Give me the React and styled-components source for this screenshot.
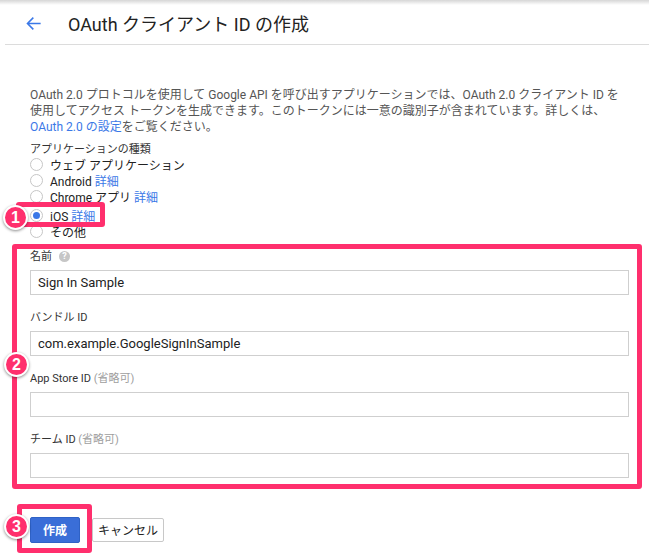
import styled, { createGlobalStyle } from "styled-components";

const GlobalStyle = createGlobalStyle`
  html, body {
    margin: 0;
    padding: 0;
    background: #fff;
  }
  body {
    font-family: Roboto, "Noto Sans CJK JP", sans-serif;
    color: #212121;
  }
`;

const PINK = "#ff2f6d";
const BLUE = "#3b78e7";

const Page = styled.div`
  width: 649px;
  min-height: 558px;
  background: linear-gradient(to bottom, rgba(0, 0, 0, 0.16), rgba(0, 0, 0, 0) 5px) no-repeat;
`;

const Header = styled.div`
  margin-left: 5px;
  height: 45px;
  border-bottom: 1px solid #dcdcdc;
  display: flex;
  align-items: center;
  padding-left: 20px;
  padding-top: 2px;
  box-sizing: border-box;
`;

const Title = styled.h1`
  margin: 0 0 0 26px;
  font-size: 18px;
  font-weight: 400;
  color: #222;
`;

const Content = styled.div`
  padding: 0 20px 0 30px;
`;

const Intro = styled.p`
  margin: 42px 0 0;
  font-size: 12px;
  line-height: 16px;
  color: #555;
`;

const Link = styled.a`
  color: ${BLUE};
  text-decoration: none;
`;

const GroupLabel = styled.div`
  margin-top: 8px;
  font-size: 11px;
  line-height: 13px;
  color: #333;
`;

const RadioRow = styled.label`
  display: flex;
  align-items: center;
  height: 16px;
  font-size: 12px;
  color: #222;
  gap: 7px;
`;

const RadioDot = styled.span`
  width: 13px;
  height: 13px;
  box-sizing: border-box;
  border-radius: 50%;
  border: 1px solid #c6c6c6;
  background: #fff;
  display: flex;
  align-items: center;
  justify-content: center;

  &::after {
    content: "";
    width: 7px;
    height: 7px;
    border-radius: 50%;
    background: ${(p) => (p.$checked ? BLUE : "transparent")};
  }
`;

const Annotated = styled.div`
  position: relative;
  display: ${(p) => (p.$inline ? "inline-flex" : "flow-root")};
`;

const Frame = styled.span`
  position: absolute;
  top: ${(p) => p.$t}px;
  right: ${(p) => p.$r}px;
  bottom: ${(p) => p.$b}px;
  left: ${(p) => p.$l}px;
  border: 5px solid ${PINK};
  border-radius: 3px;
  pointer-events: none;
`;

const Badge = styled.span`
  position: absolute;
  left: ${(p) => p.$x}px;
  top: ${(p) => p.$y}px;
  width: 21px;
  height: 21px;
  border-radius: 50%;
  background: ${PINK};
  border: 2px solid #fff;
  box-shadow: 0 1px 3px rgba(0, 0, 0, 0.45);
  color: #fff;
  font-family: "Liberation Sans", Arial, sans-serif;
  font-weight: 700;
  font-size: 16px;
  line-height: 21px;
  text-align: center;
  z-index: 2;
`;

const Form = styled.div`
  margin-top: 10px;
  width: 599px;
`;

const Field = styled.div`
  & + & {
    margin-top: 16px;
  }
`;

const FieldLabel = styled.div`
  display: flex;
  align-items: center;
  font-size: 11px;
  line-height: 14px;
  color: #333;
  margin-bottom: 6px;
`;

const Optional = styled.span`
  color: #9e9e9e;
`;

const Help = styled.span`
  width: 11px;
  height: 11px;
  border-radius: 50%;
  background: #c6c6c6;
  color: #fff;
  font-size: 9px;
  font-weight: 700;
  line-height: 11px;
  text-align: center;
  margin-left: 7px;
`;

const Input = styled.input`
  display: block;
  width: 100%;
  height: 25px;
  box-sizing: border-box;
  border: 1px solid #cfcfcf;
  padding: 0 7px;
  font-family: Roboto, "Noto Sans CJK JP", sans-serif;
  font-size: 13px;
  color: #222;
  outline: none;
`;

const Actions = styled.div`
  margin-top: 39px;
  display: flex;
  align-items: center;
  gap: 12px;
`;

const Button = styled.button`
  height: ${(p) => (p.$primary ? 26 : 24)}px;
  padding: 0 ${(p) => (p.$primary ? 12 : 5)}px;
  border-radius: 2px;
  border: 1px solid ${(p) => (p.$primary ? "#2f62c6" : "#c8c8c8")};
  background: ${(p) => (p.$primary ? "#3a6ed8" : "#fff")};
  color: ${(p) => (p.$primary ? "#fff" : "#222")};
  font-family: Roboto, "Noto Sans CJK JP", sans-serif;
  font-size: 12px;
  font-weight: ${(p) => (p.$primary ? 700 : 400)};
  cursor: pointer;
`;

const BackArrow = () => (
  <svg width="17" height="17" viewBox="0 0 24 24" fill="none">
    <path
      d="M21 12H4M11 4.5L3.5 12l7.5 7.5"
      stroke={BLUE}
      strokeWidth="2.2"
      strokeLinecap="square"
    />
  </svg>
);

const kinds = [
  { label: "ウェブ アプリケーション" },
  { label: "Android", more: true },
  { label: "Chrome アプリ", more: true },
  { label: "iOS", more: true, checked: true },
  { label: "その他" },
];

const fields = [
  { label: "名前", help: true, value: "Sign In Sample" },
  { label: "バンドル ID", value: "com.example.GoogleSignInSample" },
  { label: "App Store ID", optional: true, value: "" },
  { label: "チーム ID", optional: true, value: "" },
];

const Radio = ({ label, more, checked }) => (
  <RadioRow>
    <RadioDot $checked={checked} />
    <span>
      {label}
      {more && <Link> 詳細</Link>}
    </span>
  </RadioRow>
);

export default function App() {
  return (
    <Page>
      <GlobalStyle />
      <Header>
        <BackArrow />
        <Title>OAuth クライアント ID の作成</Title>
      </Header>
      <Content>
        <Intro>
          OAuth 2.0 プロトコルを使用して Google API を呼び出すアプリケーションでは、OAuth 2.0 クライアント ID を使用してアクセス トークンを生成できます。このトークンには一意の識別子が含まれています。詳しくは、
          <Link>OAuth 2.0 の設定</Link>をご覧ください。
        </Intro>
        <GroupLabel>アプリケーションの種類</GroupLabel>
        {kinds.map((k) =>
          k.checked ? (
            <Annotated key={k.label} $inline>
              <Radio {...k} />
              <Frame $t={-6} $r={-10} $b={-3} $l={-14} />
              <Badge $x={-27} $y={-3}>1</Badge>
            </Annotated>
          ) : (
            <Radio key={k.label} {...k} />
          )
        )}
        <Annotated>
          <Form>
            {fields.map((f) => (
              <Field key={f.label}>
                <FieldLabel>
                  <span>
                    {f.label}
                    {f.optional && <Optional>{" "}(省略可)</Optional>}
                  </span>
                  {f.help && <Help>?</Help>}
                </FieldLabel>
                <Input readOnly defaultValue={f.value} />
              </Field>
            ))}
          </Form>
          <Frame $t={4} $r={-13} $b={-11} $l={-18} />
          <Badge $x={-26} $y={112}>2</Badge>
        </Annotated>
        <Actions>
          <Annotated $inline>
            <Button $primary>作成</Button>
            <Frame $t={-13} $r={-12} $b={-10} $l={-13} />
            <Badge $x={-26} $y={-3}>3</Badge>
          </Annotated>
          <Button>キャンセル</Button>
        </Actions>
      </Content>
    </Page>
  );
}
